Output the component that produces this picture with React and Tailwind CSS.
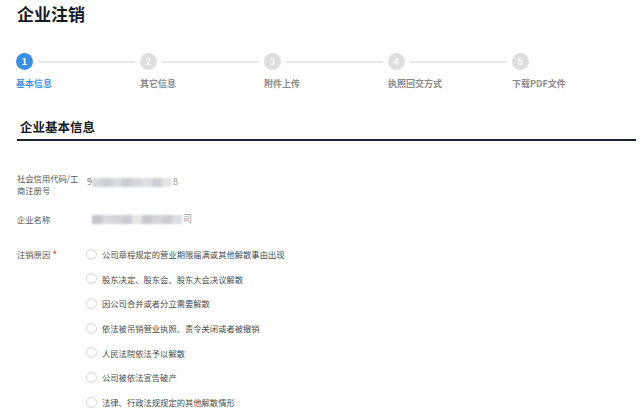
const FONT = { fontFamily: '"Noto Sans CJK SC", "Noto Sans", sans-serif' };

const STEPS = ['基本信息', '其它信息', '附件上传', '执照回交方式', '下载PDF文件'];

const REASONS = [
  '公司章程规定的营业期限届满或其他解散事由出现',
  '股东决定、股东会、股东大会决议解散',
  '因公司合并或者分立需要解散',
  '依法被吊销营业执照、责令关闭或者被撤销',
  '人民法院依法予以解散',
  '公司被依法宣告破产',
  '法律、行政法规规定的其他解散情形',
];

// ── blurred (masked) value ───────────────────────────────────
function Masked({ first, last, blocks }) {
  return (
    <div className="flex items-center h-[12px] text-[9px] text-[#777]">
      <span className="w-[5px]">{first}</span>
      <div className="flex h-[9px] blur-[0.8px]">
        {blocks.map((c, i) => (
          <div key={i} className="h-full w-[10px]" style={{ background: c }} />
        ))}
      </div>
      <span className="ml-[1px] text-[#999]">{last}</span>
    </div>
  );
}

function Step({ n, label, active, last }) {
  return (
    <div className={last ? 'w-[80px]' : 'w-[124px]'}>
      <div className="flex items-center h-[17px]">
        <div
          className={`w-[17px] h-[17px] rounded-full flex items-center justify-center text-[9px] font-bold text-white shrink-0 ${
            active ? 'bg-[#3c8ee3]' : 'bg-[#dedede]'
          }`}
        >
          {n}
        </div>
        {!last && <div className="flex-1 h-[2px] bg-[#e8e8e8] mx-[5px]" />}
      </div>
      <div
        className={`mt-[9px] text-[9px] font-bold leading-none whitespace-nowrap ${
          active ? 'text-[#4a8fdc]' : 'text-[#8a8a8a]'
        }`}
      >
        {label}
      </div>
    </div>
  );
}

export default function App() {
  return (
    <div className="w-[640px] h-[415px] bg-white overflow-hidden" style={FONT}>
      {/* ── Title ── */}
      <h1 className="pl-[17px] pt-[2px] text-[17px] font-bold text-[#141a26] leading-[24px]">企业注销</h1>

      {/* ── Steps ── */}
      <div className="flex pl-[16px] mt-[27px]">
        {STEPS.map((s, i) => (
          <Step key={s} n={i + 1} label={s} active={i === 0} last={i === STEPS.length - 1} />
        ))}
      </div>

      {/* ── Section heading ── */}
      <div className="ml-[17px] mr-[4px] mt-[30px] border-b-2 border-[#1c2331] pl-[3px] pb-[3px]">
        <h2 className="text-[12.5px] font-bold text-[#141a26] leading-[18px]">企业基本信息</h2>
      </div>

      {/* ── Fields ── */}
      <div className="pl-[17px] mt-[31px] text-[8.3px] text-[#555]">
        <div className="flex">
          <div className="w-[70px] leading-[12px]">
            社会信用代码/工
            <br />
            商注册号
          </div>
          <div className="mt-[4px]">
            <Masked
              first="9"
              last="8"
              blocks={['#d6d8db', '#cdd0d4', '#d8dadd', '#cbced2', '#d5d7da', '#dfe0e2', '#cdd0d4', '#e3e4e6']}
            />
          </div>
        </div>

        <div className="flex mt-[17px] items-center">
          <div className="w-[70px] leading-[12px]">企业名称</div>
          <Masked
            first=""
            last="司"
            blocks={['#c2c5ca', '#d8dadd', '#d2d4d8', '#c9ccd1', '#e4e5e7', '#c5c8cd', '#d3d5d8', '#cbced2', '#dcdee1']}
          />
        </div>

        <div className="flex mt-[23px]">
          <div className="w-[69px] leading-[12px] flex items-start">
            注销原因<span className="text-[#e5433b] ml-[2px] text-[11px] leading-[12px]">*</span>
          </div>
          <div className="flex flex-col gap-[12.7px]">
            {REASONS.map((r) => (
              <label key={r} className="flex items-center h-[12px] gap-[5px] text-[#4a4a4a]">
                <span className="w-[11px] h-[11px] rounded-full border border-[#d6d6d6] bg-white shrink-0" />
                <span className="leading-none whitespace-nowrap">{r}</span>
              </label>
            ))}
            <div className="h-px w-[214px] bg-[#eeeeee] -mt-[3px]" />
          </div>
        </div>
      </div>
    </div>
  );
}
